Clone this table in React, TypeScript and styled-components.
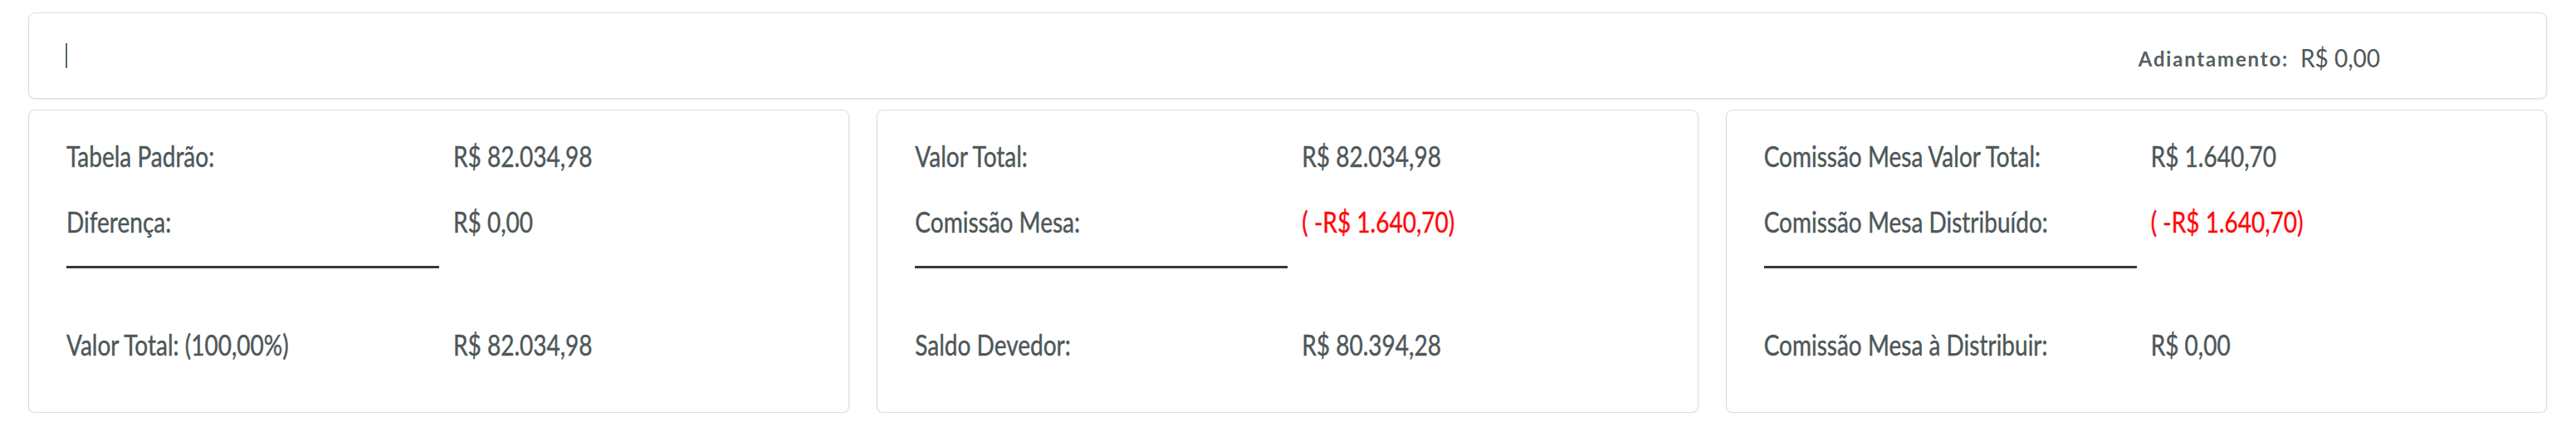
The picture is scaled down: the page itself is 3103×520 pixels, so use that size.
import React from 'react';
import styled, { createGlobalStyle } from 'styled-components';

const GlobalStyle = createGlobalStyle`
    html, body {
        margin: 0;
        padding: 0;
        background: #ffffff;
    }
    body {
        font-family: Lato, "Open Sans", Arial, sans-serif;
        color: #4d5759;
    }
`;

const Page = styled.div`
    padding: 15px 35px 0 34px;
    display: flex;
    flex-direction: column;
    gap: 13px;
`;

const Panel = styled.div`
    background: #ffffff;
    border: 1px solid #dcdcdc;
    border-radius: 8px;
    box-shadow: 0 1px 2px rgba(0, 0, 0, 0.08);
    box-sizing: border-box;
`;

const TopBar = styled(Panel)`
    height: 104px;
    display: flex;
    align-items: center;
    padding: 0 200px 0 44px;
`;

const Caret = styled.span`
    display: block;
    width: 2px;
    height: 30px;
    background: #5b6a6b;
`;

const Advance = styled.div`
    margin-left: auto;
    display: flex;
    align-items: baseline;
    gap: 14px;
    padding-top: 4px;
`;

const AdvanceLabel = styled.span`
    font-size: 24px;
    font-weight: 700;
    letter-spacing: 1.8px;
    color: #566062;
`;

const AdvanceValue = styled.span`
    font-size: 28px;
    color: #4d5759;
    display: inline-block;
    transform: scaleY(1.08);
`;

const Cards = styled.div`
    display: grid;
    grid-template-columns: repeat(3, 1fr);
    gap: 33px;
`;

const Card = styled(Panel)`
    height: 365px;
    padding: 34px 45px 0 45px;
`;

const Line = styled.div<{ offset: number }>`
    display: grid;
    grid-template-columns: 466px 1fr;
    height: 40px;
    line-height: 40px;
    font-size: 28px;
    white-space: nowrap;
    margin-top: ${(p) => p.offset}px;
`;

const Text = styled.span<{ negative?: boolean }>`
    display: inline-block;
    justify-self: start;
    transform: scaleY(1.25);
    -webkit-text-stroke: 0.35px currentColor;
    color: ${(p) => (p.negative ? '#ff0a0a' : '#4d5759')};
`;

const Rule = styled.div`
    width: 449px;
    height: 3px;
    margin-top: 34px;
    background: #36393b;
`;

type Row = { label: string; value: string; negative?: boolean };

const summaries: { top: Row[]; bottom: Row }[] = [
    {
        top: [
            { label: 'Tabela Padrão:', value: 'R$ 82.034,98' },
            { label: 'Diferença:', value: 'R$ 0,00' },
        ],
        bottom: { label: 'Valor Total: (100,00%)', value: 'R$ 82.034,98' },
    },
    {
        top: [
            { label: 'Valor Total:', value: 'R$ 82.034,98' },
            { label: 'Comissão Mesa:', value: '( -R$ 1.640,70)', negative: true },
        ],
        bottom: { label: 'Saldo Devedor:', value: 'R$ 80.394,28' },
    },
    {
        top: [
            { label: 'Comissão Mesa Valor Total:', value: 'R$ 1.640,70' },
            { label: 'Comissão Mesa Distribuído:', value: '( -R$ 1.640,70)', negative: true },
        ],
        bottom: { label: 'Comissão Mesa à Distribuir:', value: 'R$ 0,00' },
    },
];

const SummaryLine: React.FC<{ row: Row; offset: number }> = ({ row, offset }) => (
    <Line offset={offset}>
        <Text>{row.label}</Text>
        <Text negative={row.negative}>{row.value}</Text>
    </Line>
);

const SummaryCard: React.FC<{ top: Row[]; bottom: Row }> = ({ top, bottom }) => (
    <Card>
        {top.map((row, i) => (
            <SummaryLine key={row.label} row={row} offset={i === 0 ? 0 : 39} />
        ))}
        <Rule />
        <SummaryLine row={bottom} offset={71} />
    </Card>
);

export default function App() {
    return (
        <>
            <GlobalStyle />
            <Page>
                <TopBar>
                    <Caret />
                    <Advance>
                        <AdvanceLabel>Adiantamento:</AdvanceLabel>
                        <AdvanceValue>R$ 0,00</AdvanceValue>
                    </Advance>
                </TopBar>
                <Cards>
                    {summaries.map((s, i) => (
                        <SummaryCard key={i} top={s.top} bottom={s.bottom} />
                    ))}
                </Cards>
            </Page>
        </>
    );
}
